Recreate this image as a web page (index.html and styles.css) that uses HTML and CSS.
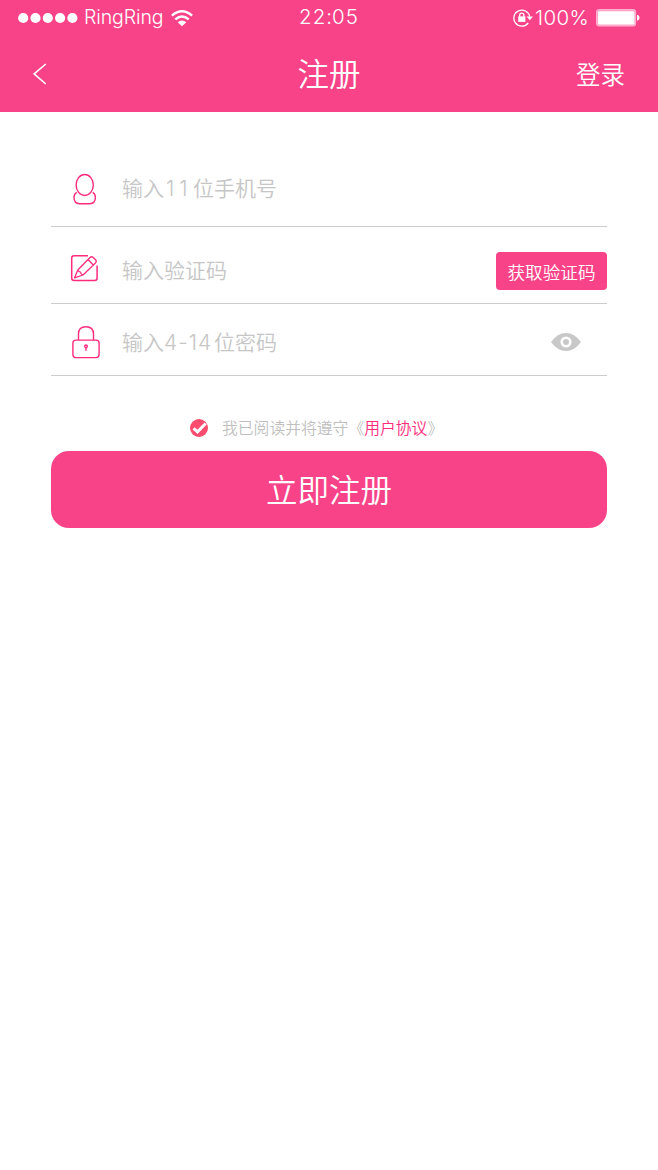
FILE: index.html
```html
<!DOCTYPE html>
<html lang="zh-CN">
<head>
<meta charset="utf-8">
<title>注册</title>
<link rel="stylesheet" href="styles.css">
</head>
<body>
<header class="header">
  <div class="status">
    <div class="status-left">
      <svg class="dots" width="60" height="12" viewBox="0 0 60 12" fill="#fff"><circle cx="5.2" cy="6" r="5.1"/><circle cx="17.5" cy="6" r="5.1"/><circle cx="29.8" cy="6" r="5.1"/><circle cx="42.1" cy="6" r="5.1"/><circle cx="54.4" cy="6" r="5.1"/></svg>
      <span class="carrier">RingRing</span>
      <svg class="wifi" width="22" height="17" viewBox="0 0 22 17" fill="none" stroke="#fff" stroke-width="2.5"><path d="M.9 5.6Q11-3 21.1 5.6M4.3 9.4Q11 3.7 17.7 9.4"/><path d="M6.7 12.2Q11 8.6 15.3 12.2L11 16.3Z" fill="#fff" stroke="none"/></svg>
    </div>
    <span class="time">22<span class="colon">:</span>05</span>
    <div class="status-right">
      <svg class="rotation" width="20" height="18" viewBox="0 0 20 18" fill="none" stroke="#fff" stroke-width="1.3"><path d="M16.7 7.6A8 8 0 1 0 15.2 14"/><path d="M13.6 7.6H20L16.8 11.2Z" fill="#fff" stroke="none"/><rect x="5.2" y="7.4" width="7.2" height="5.5" fill="#fff" stroke="none"/><path d="M6.7 8V6.2a2.1 2.1 0 0 1 4.2 0V8"/></svg>
      <span class="percent">100%</span>
      <svg class="battery" width="44" height="18" viewBox="0 0 44 18"><rect x=".6" y=".6" width="39" height="16.4" rx="2" fill="#ff9fc5" stroke="#ffb9d4"/><rect x="2" y="2.2" width="36.4" height="13.2" rx="1" fill="#fff"/><path d="M41 5.8q2.6.6 2.6 3t-2.6 3Z" fill="#fff"/></svg>
    </div>
  </div>
  <nav class="nav">
    <svg class="back" width="14" height="22" viewBox="0 0 14 22" fill="none" stroke="#fff" stroke-width="1.6"><path d="M12.8 1L1.2 10.9L12.8 21"/></svg>
    <h1 class="title">注册</h1>
    <a class="login">登录</a>
  </nav>
</header>
<main class="form">
  <div class="row row-phone">
    <svg class="icon" width="30" height="34" viewBox="0 0 30 34" fill="none" stroke="#ff2c7d" stroke-width="1.4"><ellipse cx="14.7" cy="13" rx="8.6" ry="10.5"/><path d="M6.8 20.3C4.6 21.4 4 23.400 4 25.6C4 29.8 6.2 31.7 9.7 31.700H19.700C23.200 31.700 25.400 29.800 25.400 25.600C25.400 23.400 24.800 21.400 22.600 20.300"/></svg>
    <span class="hint">输入<span class="ones">11</span>位手机号</span>
  </div>
  <div class="row row-code">
    <svg class="icon" width="30" height="34" viewBox="0 0 30 34" fill="none" stroke="#ff2c7d" stroke-width="1.5" stroke-linejoin="round"><path d="M18 3.700H4.200Q1.700 3.700 1.700 6.200V26Q1.700 28.500 4.200 28.500H24.600Q27.100 28.500 27.100 26V13.400"/><path stroke-width="1.300" d="M4.500 25.900L7.800 18L20 5.500Q21.600 4 23.200 5.500L25.500 7.800Q27 9.400 25.500 11L13 23ZM7.800 18Q9 20 10.500 20.200Q10.700 22 13 23M18 7.500L23.300 13"/></svg>
    <span class="hint">输入验证码</span>
    <button class="code-button">获取验证码</button>
  </div>
  <div class="row row-password">
    <svg class="icon" width="30" height="34" viewBox="0 0 30 34" fill="none" stroke="#ff2c7d" stroke-width="1.400"><rect x="2.900" y="15.100" width="26.200" height="17.500" rx="3"/><path d="M8.500 15V9Q8.500 1.700 16 1.700T23.500 9V15"/><circle cx="16" cy="21.300" r="1.300"/><path d="M16 22.500V25.800"/></svg>
    <span class="hint">输入<span class="digits">4-14</span>位密码</span>
    <svg class="eye" width="30" height="18" viewBox="0 0 30 18"><path d="M0 9Q6.500 0 15 0T30 9Q23.500 18 15 18T0 9Z" fill="#c8c8c8"/><circle cx="15" cy="9" r="4.300" fill="#c8c8c8" stroke="#fff" stroke-width="2.600"/></svg>
  </div>
  <div class="agreement">
    <svg class="check" width="18" height="18" viewBox="0 0 18 18"><circle cx="9" cy="9" r="9" fill="#fa4c6e"/><path d="M3.600 9.300L7.500 12.800L15.600 4.500" fill="none" stroke="#fff" stroke-width="3"/></svg>
    <span class="terms">我已阅读并将遵守《<a class="link">用户协议</a>》</span>
  </div>
  <button class="submit">立即注册</button>
</main>
</body>
</html>
```

FILE: styles.css
```css
* { box-sizing: border-box; }
body { margin: 0; background: #fff; font-family: "Noto Sans CJK SC DemiLight", "Noto Sans CJK SC", sans-serif; font-weight: 350; }
button { border: 0; padding: 0; color: #fff; background: #f94388; font: inherit; }
svg { display: block; flex: none; }
.header { height: 112px; background: #f94388; color: #fff; }
.status { height: 36px; display: grid; grid-template-columns: 1fr auto 1fr; font-family: Inter, sans-serif; font-weight: 300; line-height: 36px; }
.status-left, .status-right { display: flex; align-items: center; }
.status-left { padding-left: 18px; }
.status-right { justify-content: flex-end; padding-right: 18px; }
.carrier { margin-left: 6px; width: 79px; font-size: 19.5px; letter-spacing: -.1px; line-height: 34px; height: 36px; white-space: nowrap; }
.wifi { margin-left: 8px; }
.time { font-size: 20.5px; line-height: 33px; letter-spacing: 1px; }
.colon { letter-spacing: 0; }
.percent { font-size: 20.5px; letter-spacing: .4px; width: 54px; margin-left: 2px; white-space: nowrap; }
.battery { margin-left: 7px; }
.nav { height: 76px; display: grid; grid-template-columns: 1fr auto 1fr; align-items: center; padding: 0 33px; }
.title { margin: 0; font-size: 31.5px; font-weight: 350; line-height: 72px; height: 76px; }
.login { justify-self: end; font-size: 24.5px; line-height: 76px; }
.form { padding: 38px 51px 0; }
.row { display: flex; align-items: center; border-bottom: 1px solid #ccc; padding-left: 19px; }
.row-phone { height: 77px; }
.row-phone .icon { margin-top: 2px; }
.row-code { height: 77px; padding-top: 8px; }
.row-password { height: 72px; padding-top: 3px; }
.row-password .icon { margin-top: 2px; }
.icon { margin-right: 22px; }
.hint { flex: 1; font-size: 21px; color: #c6c6c6; line-height: 30px; padding-bottom: 1px; }
.row-phone .hint { padding-bottom: 2px; }
.row-code .hint { padding-bottom: 0; }
.row-password .hint { padding-bottom: 0; }
.ones, .digits { font-family: Inter, sans-serif; font-weight: 300; display: inline-block; line-height: 1; white-space: nowrap; }
.ones { width: 29px; letter-spacing: 5px; padding-left: 2px; }
.digits { width: 50px; letter-spacing: 1px; }
.code-button { width: 111px; height: 38px; border-radius: 4px; font-size: 17.6px; margin-top: 4px; }
.eye { margin-right: 26px; margin-top: 1px; }
.agreement { height: 75px; padding: 39px 0 0 139px; display: flex; align-items: flex-start; }
.check { margin-top: 4px; }
.terms { margin-left: 14px; font-size: 15.8px; line-height: 26px; color: #bfbfbf; white-space: nowrap; }
.link { color: #ff2c7d; }
.submit { display: block; width: 100%; height: 77px; padding-bottom: 3px; border-radius: 18px; font-size: 31.5px; }
```
